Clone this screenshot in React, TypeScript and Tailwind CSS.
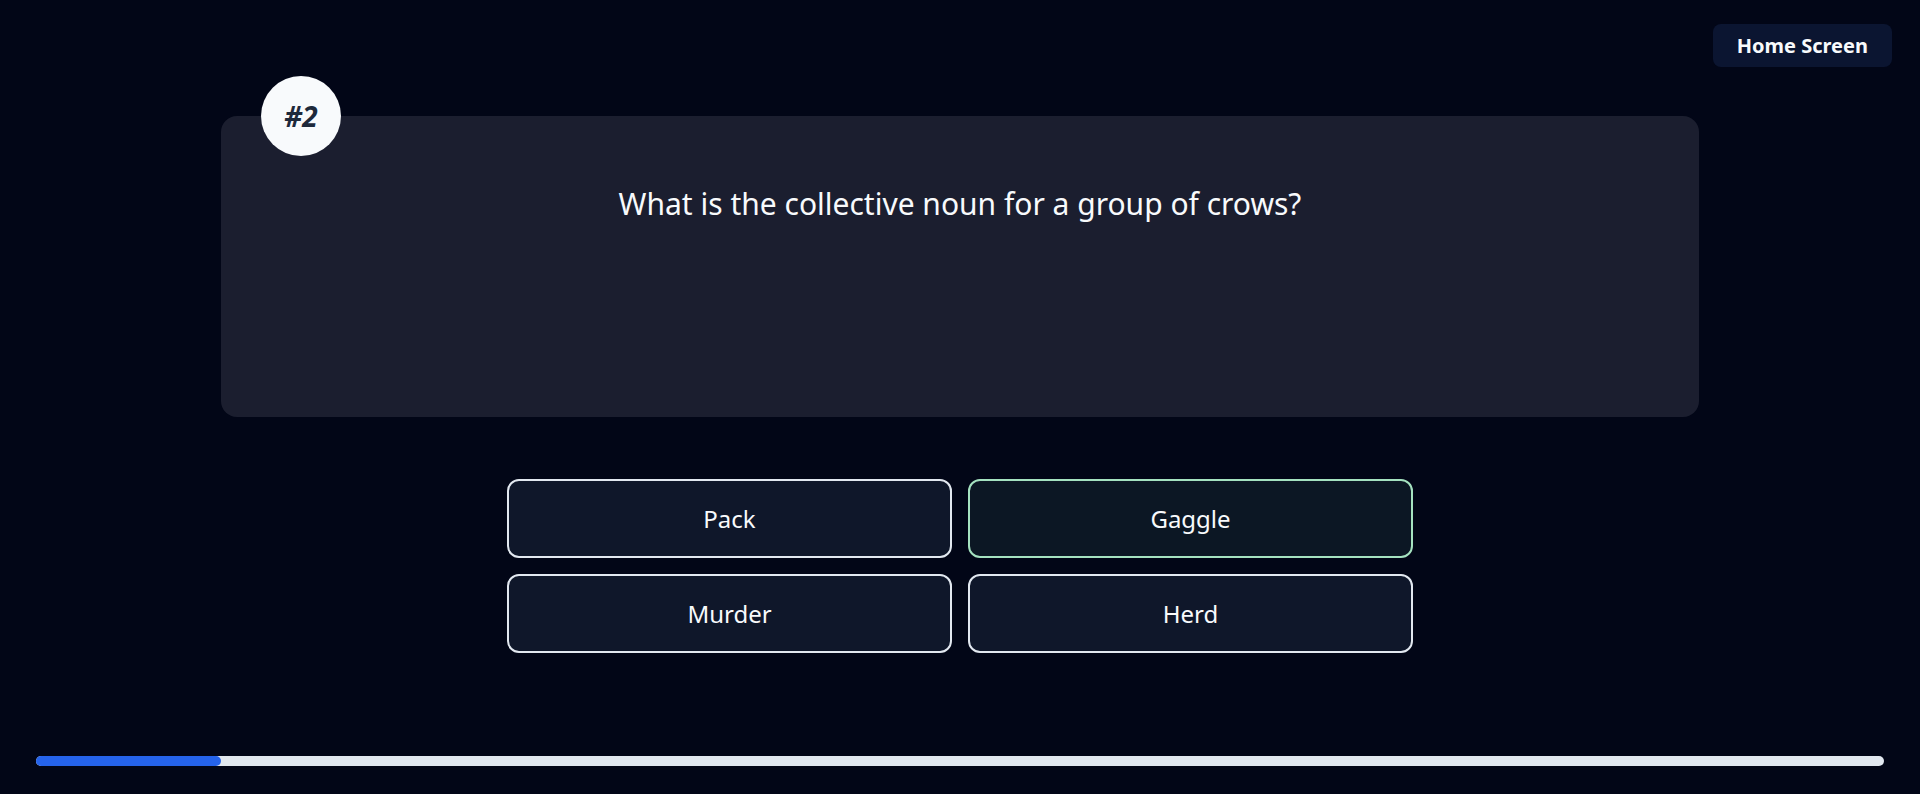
import React from "react";

const answers = [
  { label: "Pack", selected: false },
  { label: "Gaggle", selected: true },
  { label: "Murder", selected: false },
  { label: "Herd", selected: false },
];

export default function App() {
  const progress = 10;

  return (
    <div
      className="relative flex h-[794px] w-full flex-col overflow-hidden bg-[#020617] text-[#f8fafc]"
      style={{ fontFamily: '"Noto Sans", "Open Sans", sans-serif' }}
    >
      {/* Top bar */}
      <div className="flex justify-end pr-7 pt-6">
        <button className="h-[43px] rounded-lg bg-[#0b1531] px-6 text-xl font-bold text-[#f8fafc]">
          Home Screen
        </button>
      </div>

      {/* Question card */}
      <div className="relative mx-auto mt-[49px] h-[301px] w-[1478px] rounded-2xl bg-[#1b1e2f] px-10 pt-[70px]">
        <div className="absolute -top-10 left-10 flex h-20 w-20 items-center justify-center rounded-full bg-[#f8fafc]">
          <span className="text-[28px] font-bold italic text-[#1e293b]">#2</span>
        </div>
        <p className="text-center text-3xl text-[#f8fafc]">
          What is the collective noun for a group of crows?
        </p>
      </div>

      {/* Answers */}
      <div className="mx-auto mt-[62px] grid w-[906px] grid-cols-2 gap-4">
        {answers.map((a) => (
          <button
            key={a.label}
            className={`flex h-[79px] items-center justify-center rounded-xl border-2 text-2xl text-[#f8fafc] ${
              a.selected
                ? "border-[#a5e2c0] bg-[#0c1724]"
                : "border-[#e2e8f0] bg-[#0f172a]"
            }`}
          >
            {a.label}
          </button>
        ))}
      </div>

      {/* Progress */}
      <div className="mx-9 mt-[103px] h-2.5 rounded-full bg-[#e2e8f0]">
        <div
          className="h-2.5 rounded-full bg-[#2563eb]"
          style={{ width: `${progress}%` }}
        />
      </div>
    </div>
  );
}
